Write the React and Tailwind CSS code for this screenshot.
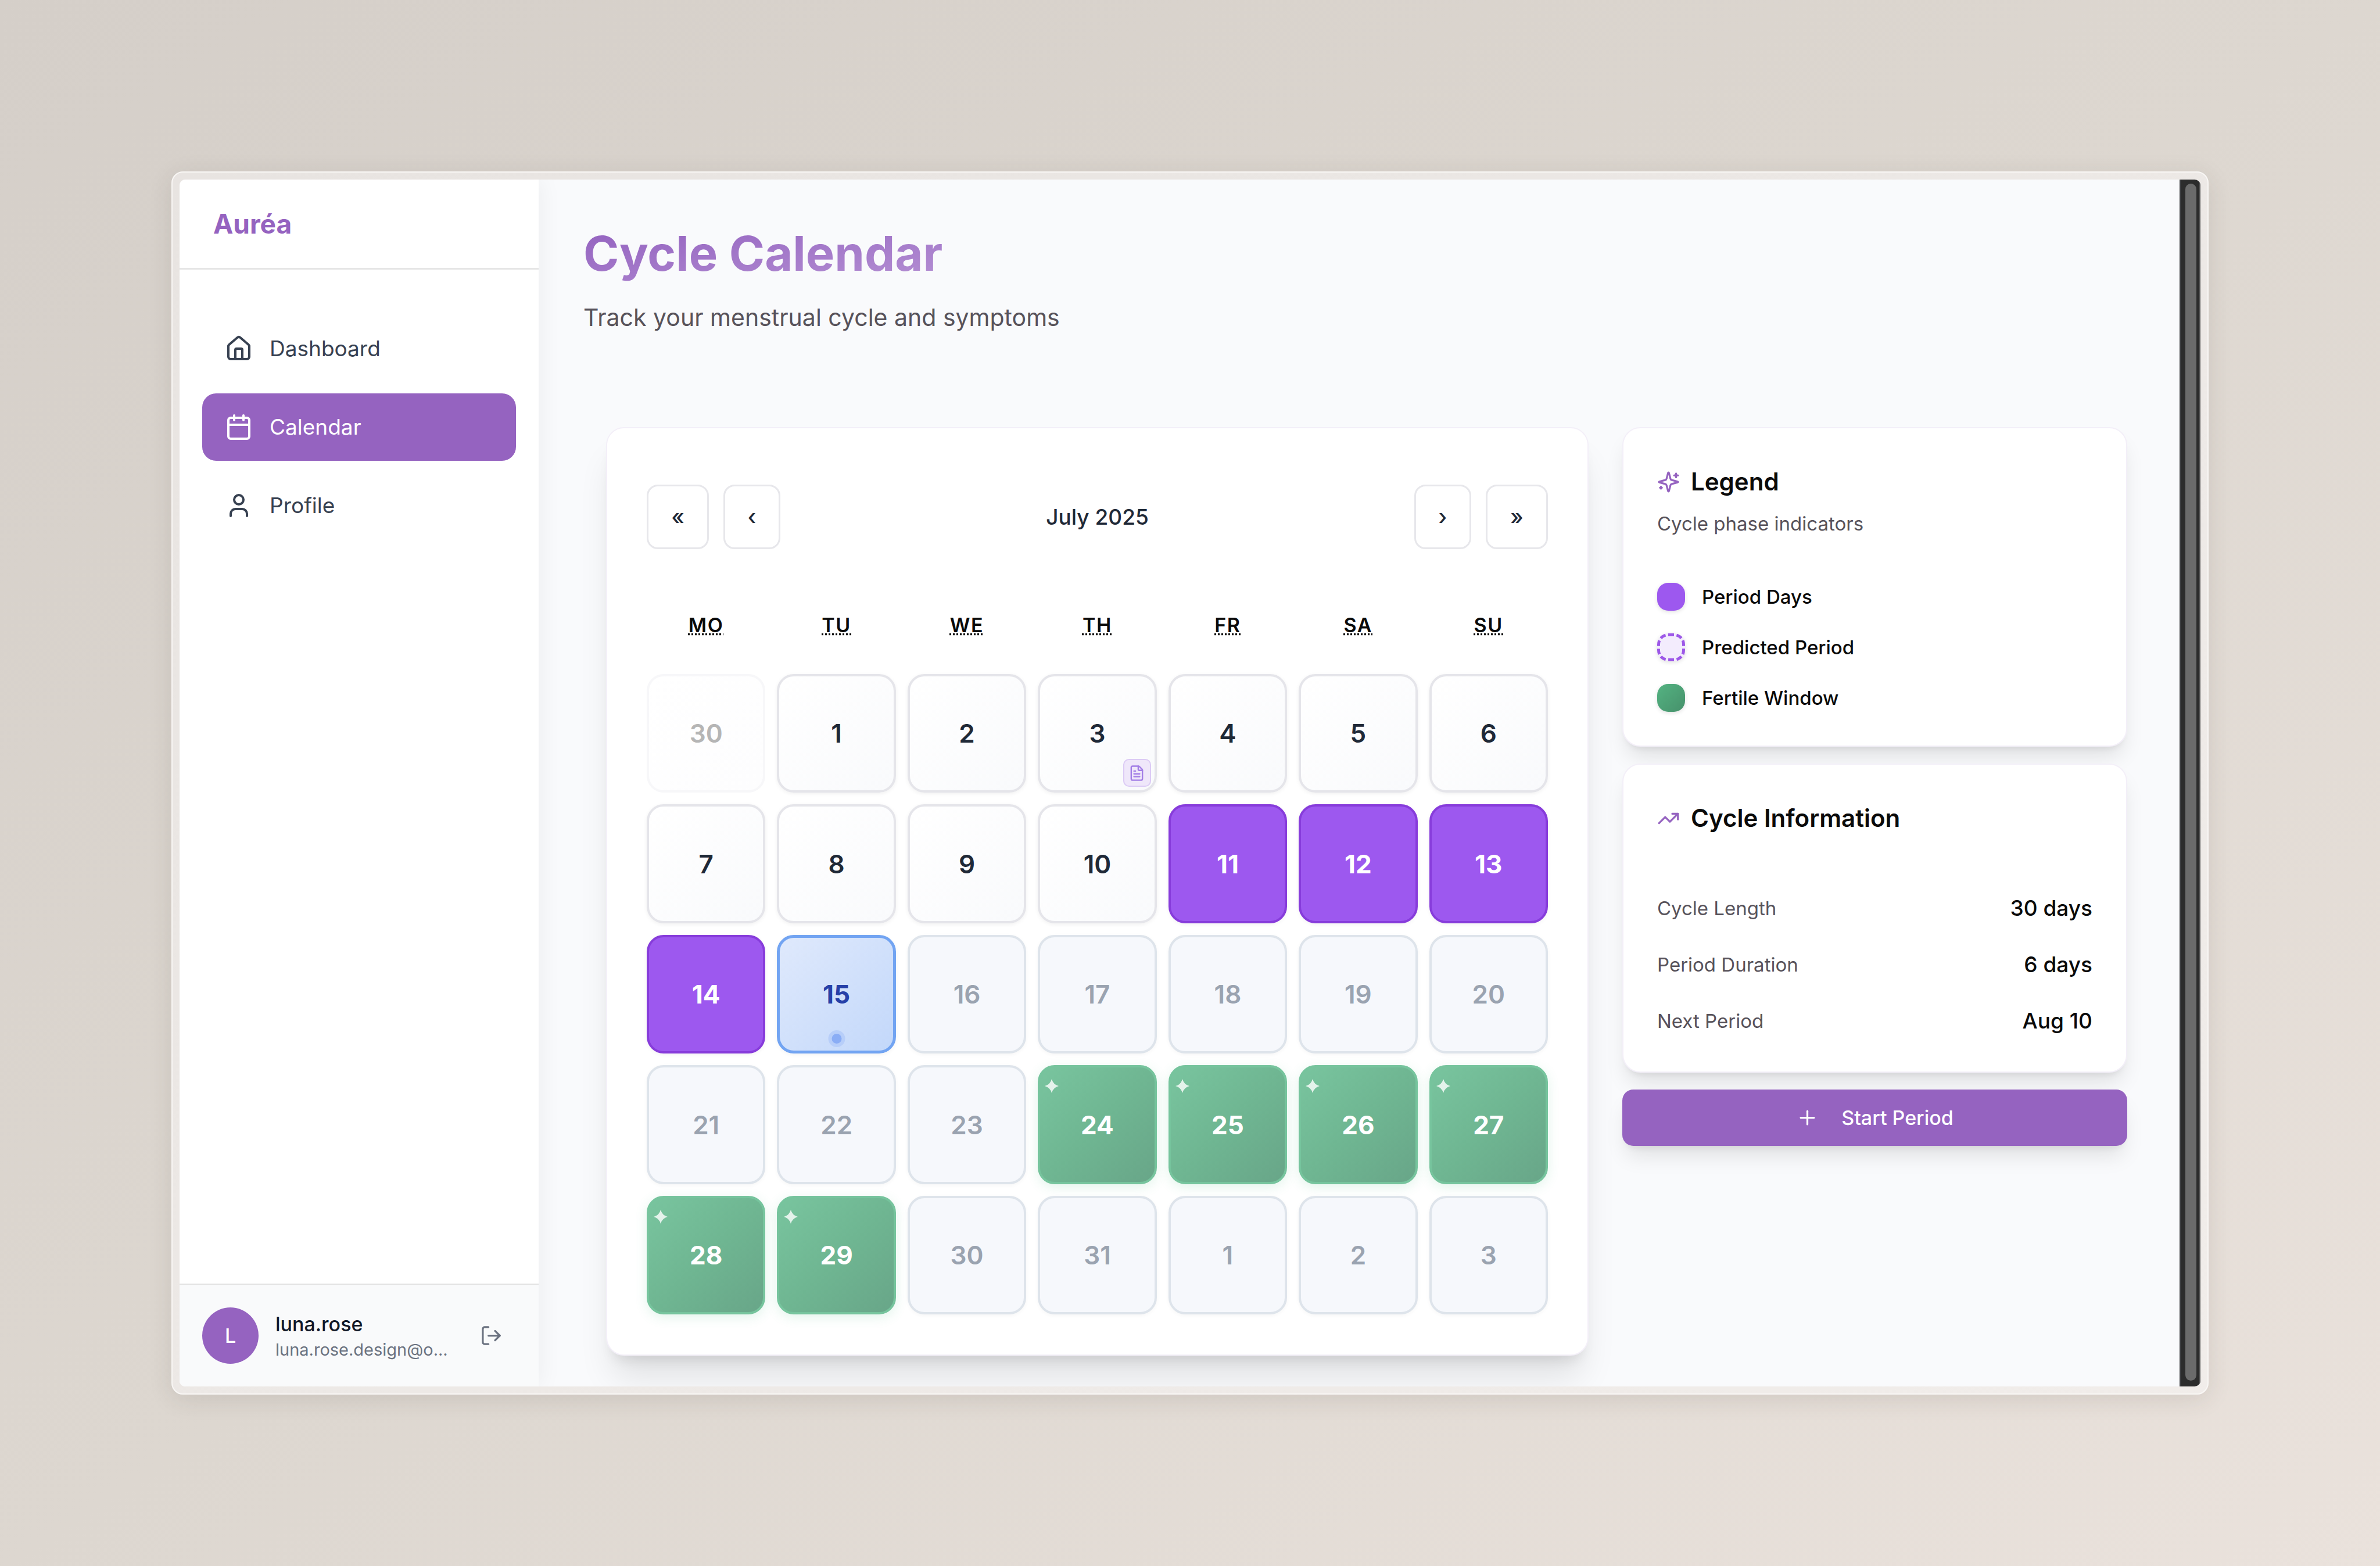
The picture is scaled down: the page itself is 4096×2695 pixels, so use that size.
import {
  House,
  Calendar,
  User,
  LogOut,
  TrendingUp,
  Plus,
  FileText,
} from "lucide-react";

const navItems = [
  { label: "Dashboard", icon: House, active: false },
  { label: "Calendar", icon: Calendar, active: true },
  { label: "Profile", icon: User, active: false },
];

const weekdays = [
  ["MO", "Monday"],
  ["TU", "Tuesday"],
  ["WE", "Wednesday"],
  ["TH", "Thursday"],
  ["FR", "Friday"],
  ["SA", "Saturday"],
  ["SU", "Sunday"],
];

const kinds = {
  outside:
    "border-4 border-[#f7f7f9] bg-linear-to-br from-white to-[#fdfdfe] text-[#b5b5b5] font-semibold",
  past: "border-4 border-[#e5e5ea] bg-linear-to-br from-white to-[#f9fafc] text-[#1f2937] font-semibold shadow-[0_2px_7px_rgba(0,0,0,0.06)]",
  period:
    "border-4 border-[#873cdb] bg-[#9d58ef] text-white font-bold shadow-[0_2px_7px_rgba(0,0,0,0.05)]",
  today:
    "border-[5px] border-[#72a4f2] bg-linear-to-br from-[#dfe9fc] to-[#c3d8fa] text-[#2640a8] font-bold shadow-[0_2px_7px_rgba(0,0,0,0.05)]",
  future:
    "border-4 border-[#dee4eb] bg-[#f6f8fc] text-[#9aa3b0] font-semibold shadow-[0_2px_7px_rgba(0,0,0,0.04)]",
  fertile:
    "border-4 border-[#76c49d] bg-linear-to-br from-[#79c59f] via-[#6fb692] to-[#68a588] bg-origin-border text-white font-bold shadow-[0_5px_20px_rgba(72,187,130,0.16)]",
};

const days = [
  { n: 30, kind: "outside" },
  { n: 1, kind: "past" },
  { n: 2, kind: "past" },
  { n: 3, kind: "past", note: true },
  ...[4, 5, 6, 7, 8, 9, 10].map((n) => ({ n, kind: "past" })),
  ...[11, 12, 13, 14].map((n) => ({ n, kind: "period" })),
  { n: 15, kind: "today" },
  ...[16, 17, 18, 19, 20, 21, 22, 23].map((n) => ({ n, kind: "future" })),
  ...[24, 25, 26, 27, 28, 29].map((n) => ({ n, kind: "fertile" })),
  ...[30, 31, 1, 2, 3].map((n) => ({ n, kind: "future" })),
];

const legend = [
  ["Period Days", "bg-[#9d58ef]"],
  ["Predicted Period", "bg-[#f3ecfd] border-5 border-dashed border-[#9d58e8]"],
  ["Fertile Window", "bg-linear-to-br from-[#54b382] to-[#46916b]"],
];

const info = [
  ["Cycle Length", "30 days"],
  ["Period Duration", "6 days"],
  ["Next Period", "Aug 10"],
];

function SparklesIcon({ className }) {
  return (
    <svg
      viewBox="0 0 24 24"
      fill="none"
      stroke="currentColor"
      strokeWidth="2"
      strokeLinecap="round"
      strokeLinejoin="round"
      className={className}
      aria-hidden="true"
    >
      <path d="M9.937 15.5A2 2 0 0 0 8.5 14.063l-6.135-1.582a.5.5 0 0 1 0-.962L8.5 9.936A2 2 0 0 0 9.937 8.5l1.582-6.135a.5.5 0 0 1 .963 0L14.063 8.5A2 2 0 0 0 15.5 9.937l6.135 1.581a.5.5 0 0 1 0 .964L15.5 14.063a2 2 0 0 0-1.437 1.437l-1.582 6.135a.5.5 0 0 1-.963 0z" />
      <path d="M20 3v4" />
      <path d="M22 5h-4" />
      <path d="M4 17v2" />
      <path d="M5 18H3" />
    </svg>
  );
}

function Sidebar() {
  return (
    <aside className="z-10 flex w-[618px] shrink-0 flex-col bg-white shadow-[5px_0_36px_rgba(0,0,0,0.05)]">
      <div className="flex h-[155px] items-center border-b-3 border-[#e5e5e5] px-[58px]">
        <a href="#home" className="text-[46px] leading-[68px] font-bold text-[#9563c0]">
          Auréa
        </a>
      </div>
      <nav className="flex flex-1 flex-col gap-[19px] px-[39px] pt-[78px]">
        {navItems.map(({ label, icon: Icon, active }) => (
          <a
            key={label}
            href={"#" + label.toLowerCase()}
            aria-current={active ? "page" : undefined}
            className={
              "flex h-[116px] items-center gap-[29px] rounded-3xl px-[39px] text-[37px] leading-[58px] " +
              (active ? "bg-[#9563c0] text-white" : "text-[#374151]")
            }
          >
            <Icon className="size-12" strokeWidth={2} />
            {label}
          </a>
        ))}
      </nav>
      <div className="flex items-center border-t-2 border-[#e2e2e2] bg-[#f9fafb] p-[39px] pr-[38px]">
        <div className="flex size-[97px] items-center justify-center rounded-full bg-[#9563c0] text-[34px] font-medium text-white">
          L
        </div>
        <div className="ml-[29px] min-w-0 flex-1">
          <p className="text-[34px] leading-[48px] font-medium text-[#111827]">luna.rose</p>
          <p className="truncate text-[29px] leading-[39px] text-[#6b7280]">luna.rose.design@o...</p>
        </div>
        <button aria-label="Log out" className="flex size-[87px] items-center justify-center text-[#6b7280]">
          <LogOut className="size-[39px]" strokeWidth={2} />
        </button>
      </div>
    </aside>
  );
}

function NavButton({ label, children, wide }) {
  return (
    <button
      aria-label={label}
      className={
        "h-[111px] rounded-[19px] border-3 border-[#e7e7eb] bg-white text-[37px] font-medium text-[#1f2937] " +
        (wide ? "w-[107px]" : "w-[98px]")
      }
    >
      {children}
    </button>
  );
}

function Day({ n, kind, note }) {
  return (
    <button
      className={
        "relative flex aspect-square items-center justify-center rounded-[29px] text-[44px] leading-[58px] " +
        kinds[kind]
      }
    >
      {n}
      {kind === "fertile" && (
        <svg viewBox="0 0 24 24" className="absolute top-[20px] left-[8px] size-6 fill-white/80" aria-hidden="true">
          <path d="M12 0Q14.5 9.5 24 12Q14.5 14.5 12 24Q9.5 14.5 0 12Q9.5 9.5 12 0Z" />
        </svg>
      )}
      {kind === "today" && (
        <span className="absolute bottom-[6px] left-1/2 size-[29px] -translate-x-1/2 rounded-full border-6 border-[#b7cef9] bg-[#8aadf5]" />
      )}
      {note && (
        <span className="absolute right-[6px] bottom-[6px] flex size-12 items-center justify-center rounded-[10px] border-2 border-[#dccbf5] bg-[#efe7fa] text-[#a37fe6]">
          <FileText className="size-[29px]" strokeWidth={2} />
        </span>
      )}
    </button>
  );
}

function CalendarCard() {
  return (
    <section className="min-w-0 flex-1 rounded-[31px] border-2 border-[#f3eff8] bg-white px-[68px] pt-[97px] pb-[69px] shadow-[0_48px_60px_-12px_rgba(0,0,0,0.1),0_19px_24px_-14px_rgba(0,0,0,0.12)]">
      <div className="flex items-center justify-between">
        <div className="flex gap-[25px]">
          <NavButton label="Previous year" wide>«</NavButton>
          <NavButton label="Previous month">‹</NavButton>
        </div>
        <h2 className="text-[37px] leading-[58px] font-medium text-[#1f2937]">July 2025</h2>
        <div className="flex gap-[25px]">
          <NavButton label="Next month">›</NavButton>
          <NavButton label="Next year" wide>»</NavButton>
        </div>
      </div>
      <div className="mt-[107px] grid grid-cols-7 gap-5 text-center text-[34px] leading-[48px] font-semibold tracking-wider text-[#0a0a0a]">
        {weekdays.map(([short, full]) => (
          <div key={short}>
            <abbr title={full}>{short}</abbr>
          </div>
        ))}
      </div>
      <div className="mt-[60px] grid grid-cols-7 gap-5">
        {days.map((d, i) => (
          <Day key={i} {...d} />
        ))}
      </div>
    </section>
  );
}

const card =
  "rounded-[31px] border-2 border-[#f3eff8] bg-white p-[58px] shadow-[0_24px_36px_-7px_rgba(0,0,0,0.1),0_10px_14px_-10px_rgba(0,0,0,0.12)]";

function SidePanels() {
  return (
    <div className="flex w-[869px] shrink-0 flex-col gap-[29px]">
      <section className={card}>
        <h2 className="flex items-center gap-[19px] text-[42px] leading-[68px] font-semibold text-[#0a0a0a]">
          <SparklesIcon className="size-[39px] text-[#9563c0]" />
          Legend
        </h2>
        <p className="mt-[14px] text-[33px] leading-[48px] text-[#57525a]">Cycle phase indicators</p>
        <ul className="mt-[78px] flex flex-col gap-[39px]">
          {legend.map(([label, look]) => (
            <li key={label} className="flex items-center gap-[29px] text-[33px] leading-[48px] font-medium text-[#0a0a0a]">
              <span className={"size-12 rounded-[19px] shadow-[0_2px_7px_rgba(0,0,0,0.12)] " + look} />
              {label}
            </li>
          ))}
        </ul>
      </section>
      <section className={card}>
        <h2 className="flex items-center gap-[19px] text-[42px] leading-[68px] font-semibold text-[#0a0a0a]">
          <TrendingUp className="size-[39px] text-[#9563c0]" strokeWidth={2} />
          Cycle Information
        </h2>
        <dl className="mt-[92px] flex flex-col gap-[39px]">
          {info.map(([label, value]) => (
            <div key={label} className="flex items-center justify-between leading-[58px]">
              <dt className="text-[33px] text-[#57525a]">{label}</dt>
              <dd className="text-[37px] font-medium text-[#0a0a0a]">{value}</dd>
            </div>
          ))}
        </dl>
      </section>
      <button className="flex h-[97px] items-center justify-center gap-[39px] rounded-[19px] bg-[#9563c0] text-[34px] font-medium text-white shadow-[0_24px_36px_-7px_rgba(0,0,0,0.1),0_10px_14px_-10px_rgba(0,0,0,0.12)]">
        <Plus className="size-[39px]" strokeWidth={2} />
        Start Period
      </button>
    </div>
  );
}

export default function App() {
  return (
    <div className="flex min-h-screen bg-linear-to-br from-[#d5cfc9] via-[#ddd7d0] to-[#eae2dc] p-[295px] font-['Inter',sans-serif]">
      <div className="flex flex-1 rounded-[20px] border-2 border-[#f9f7f5] bg-linear-to-br from-[#e8e4e1] to-[#f1edea] p-3 shadow-[0_8px_40px_rgba(60,50,40,0.12)]">
        <div className="flex flex-1 overflow-hidden rounded-[10px] bg-[#f9fafc]">
          <Sidebar />
          <main className="min-w-0 flex-1 pt-[79px] pr-[90px] pb-[52px] pl-[77px]">
            <h1 className="w-fit bg-linear-to-br from-[#9361bf] to-[#b48fd3] bg-clip-text text-[83px] leading-[97px] font-bold text-transparent">
              Cycle Calendar
            </h1>
            <p className="mt-[27px] text-[41px] leading-[68px] text-[#57525a]">
              Track your menstrual cycle and symptoms
            </p>
            <div className="mt-[155px] ml-[39px] flex items-start gap-[58px]">
              <CalendarCard />
              <SidePanels />
            </div>
          </main>
          <div className="flex w-9 shrink-0 border-x-2 border-l-[#3d3e41] border-r-[#555555] bg-[#2c2c2c] pt-[7px] pr-[5px] pb-[10px] pl-2">
            <div className="flex-1 rounded-full bg-[#6b6b6b]" />
          </div>
        </div>
      </div>
    </div>
  );
}
